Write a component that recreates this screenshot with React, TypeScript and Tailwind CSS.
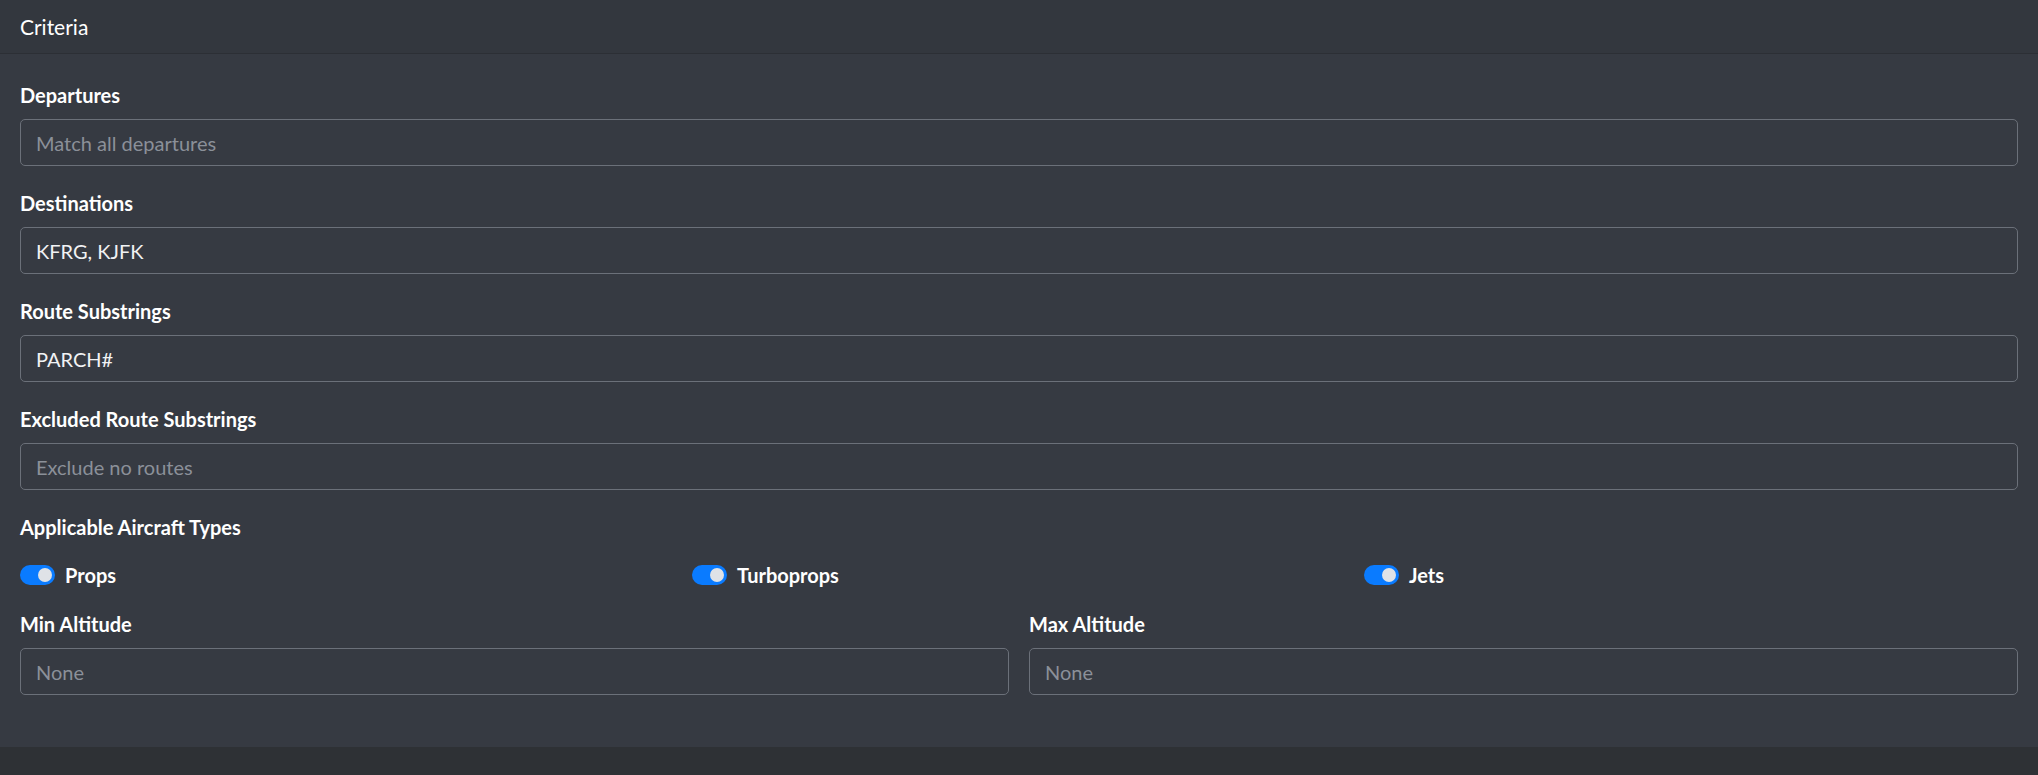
import React from 'react';

interface Field {
  label: string;
  value?: string;
  placeholder: string;
}

const fields: Field[] = [
  { label: 'Departures', placeholder: 'Match all departures' },
  { label: 'Destinations', value: 'KFRG, KJFK', placeholder: '' },
  { label: 'Route Substrings', value: 'PARCH#', placeholder: '' },
  { label: 'Excluded Route Substrings', placeholder: 'Exclude no routes' },
];

const aircraftTypes = ['Props', 'Turboprops', 'Jets'];

function TextBox({ value, placeholder }: { value?: string; placeholder: string }) {
  return (
    <div className="h-[47px] rounded-[5px] border border-[#6b7079] px-[15px] flex items-center text-[20px]">
      {value ? (
        <span className="text-[#f1f2f4]">{value}</span>
      ) : (
        <span className="text-[#8b9099]">{placeholder}</span>
      )}
    </div>
  );
}

function Toggle({ label }: { label: string }) {
  return (
    <div className="flex items-center h-[30px]">
      <div className="w-[35px] h-[20px] rounded-full bg-[#0a7bff] flex items-center justify-end pr-[3px]">
        <div className="w-[14px] h-[14px] rounded-full bg-[#dfe2e7]" />
      </div>
      <span className="ml-[10px] text-[20px] font-bold text-white">{label}</span>
    </div>
  );
}

export default function App() {
  return (
    <div className="min-h-screen bg-[#2e3135]" style={{ fontFamily: 'Lato, "Noto Sans", sans-serif' }}>
      <div className="bg-[#363a42]">
        {/* Header */}
        <div className="h-[54px] px-5 flex items-center bg-[#33373e] border-b border-[#2c2f35] text-white text-[21px]">
          Criteria
        </div>

        {/* Body */}
        <div className="px-5 pt-[29px] pb-[52px]">
          {fields.map((f) => (
            <div key={f.label} className="mb-[25px]">
              <div className="h-[24px] leading-[24px] mb-[12px] text-[20px] font-bold text-white">{f.label}</div>
              <TextBox value={f.value} placeholder={f.placeholder} />
            </div>
          ))}

          <div className="h-[24px] leading-[24px] text-[20px] font-bold text-white">Applicable Aircraft Types</div>
          <div className="grid grid-cols-3 gap-[18px] mt-[21px]">
            {aircraftTypes.map((t) => (
              <Toggle key={t} label={t} />
            ))}
          </div>

          <div className="grid grid-cols-2 gap-5 mt-[22px]">
            {['Min Altitude', 'Max Altitude'].map((l) => (
              <div key={l}>
                <div className="h-[24px] leading-[24px] mb-[12px] text-[20px] font-bold text-white">{l}</div>
                <TextBox placeholder="None" />
              </div>
            ))}
          </div>
        </div>
      </div>
    </div>
  );
}
